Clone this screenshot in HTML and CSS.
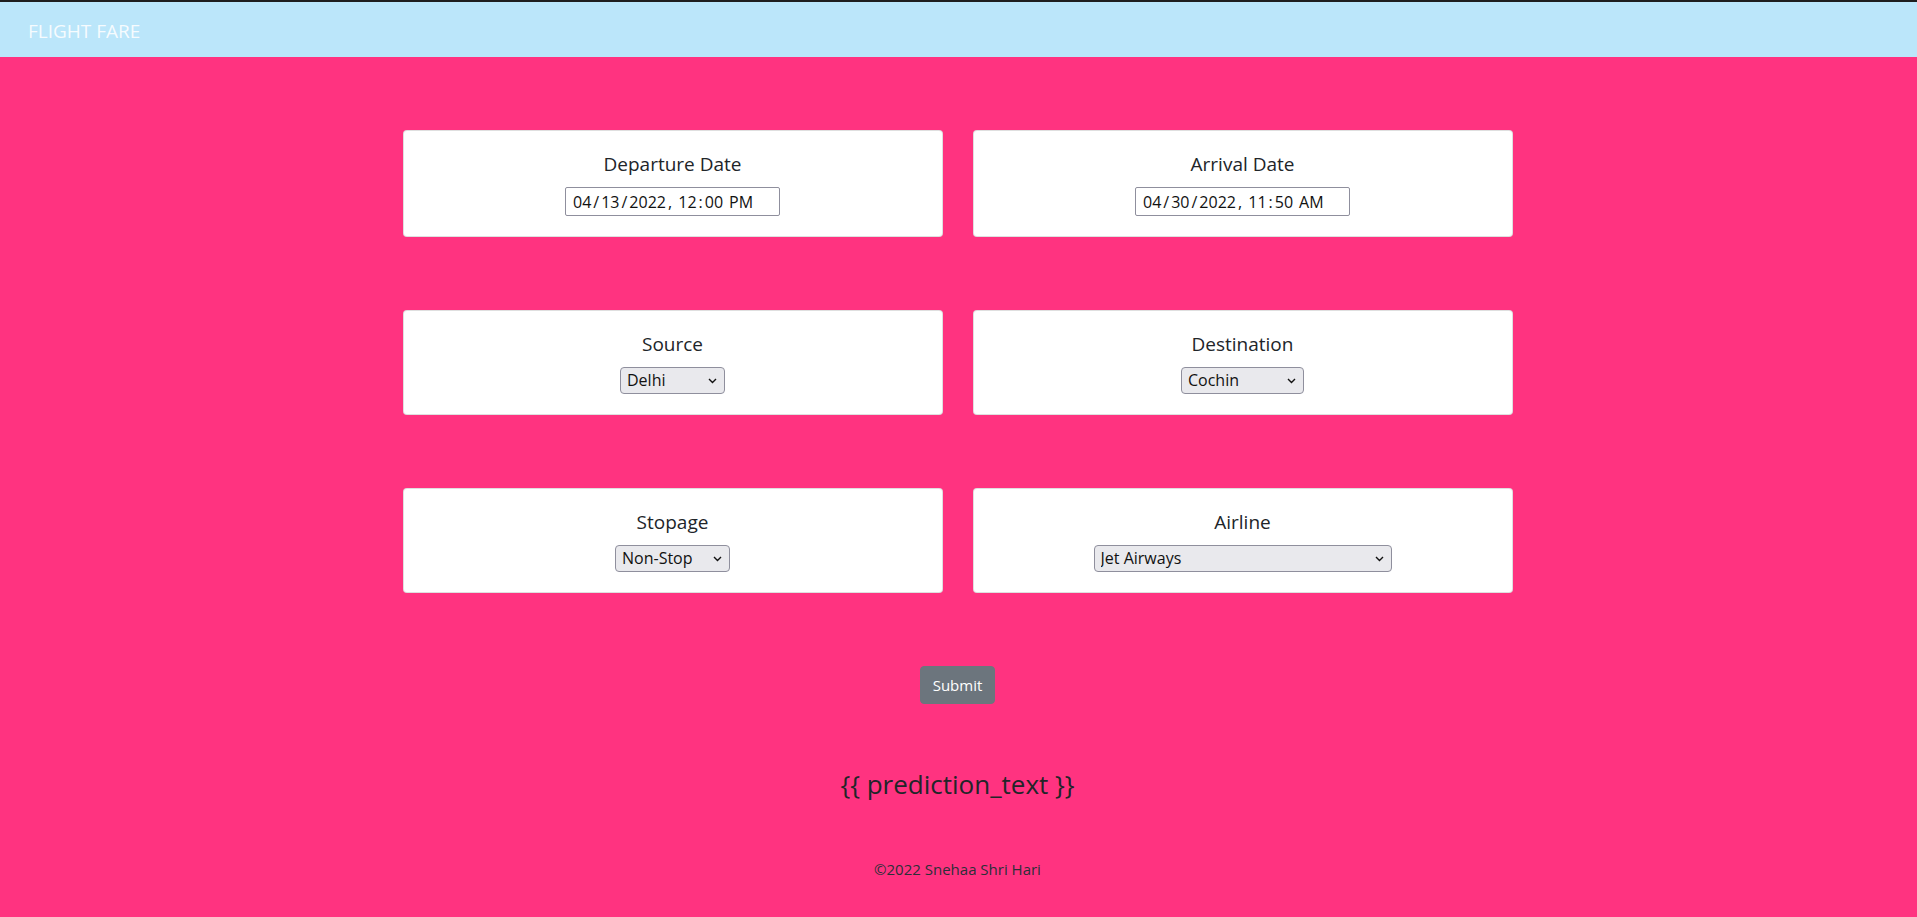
FILE: index.html
```html
<!DOCTYPE html>
<html lang="en">
<head>
<meta charset="utf-8">
<title>Flight Fare</title>
<link rel="stylesheet" href="styles.css">
</head>
<body>
<div class="topline"></div>
<nav class="navbar"><span class="brand">FLIGHT FARE</span></nav>
<main class="main">
  <form class="grid">
    <div class="card">
      <div class="card-title">Departure Date</div>
      <input class="date" type="datetime-local" value="2022-04-13T12:00">
    </div>
    <div class="card">
      <div class="card-title">Arrival Date</div>
      <input class="date" type="datetime-local" value="2022-04-30T11:50">
    </div>
    <div class="card">
      <div class="card-title">Source</div>
      <span class="sel-wrap sel-source">
        <select><option>Delhi</option><option>Kolkata</option><option>Mumbai</option><option>Chennai</option></select>
        <svg class="chev" width="9" height="6" viewBox="0 0 9 6"><path d="M1 1 L4.5 4.5 L8 1" fill="none" stroke="#111" stroke-width="1.4"/></svg>
      </span>
    </div>
    <div class="card">
      <div class="card-title">Destination</div>
      <span class="sel-wrap sel-dest">
        <select><option>Cochin</option><option>Delhi</option><option>New Delhi</option><option>Hyderabad</option><option>Kolkata</option></select>
        <svg class="chev" width="9" height="6" viewBox="0 0 9 6"><path d="M1 1 L4.5 4.5 L8 1" fill="none" stroke="#111" stroke-width="1.4"/></svg>
      </span>
    </div>
    <div class="card">
      <div class="card-title">Stopage</div>
      <span class="sel-wrap sel-stop">
        <select><option>Non-Stop</option><option>1</option><option>2</option><option>3</option><option>4</option></select>
        <svg class="chev" width="9" height="6" viewBox="0 0 9 6"><path d="M1 1 L4.5 4.5 L8 1" fill="none" stroke="#111" stroke-width="1.4"/></svg>
      </span>
    </div>
    <div class="card">
      <div class="card-title">Airline</div>
      <span class="sel-wrap sel-air">
        <select><option>Jet Airways</option><option>IndiGo</option><option>Air India</option><option>SpiceJet</option><option>Multiple carriers</option><option>GoAir</option><option>Vistara</option><option>Air Asia</option></select>
        <svg class="chev" width="9" height="6" viewBox="0 0 9 6"><path d="M1 1 L4.5 4.5 L8 1" fill="none" stroke="#111" stroke-width="1.4"/></svg>
      </span>
    </div>
  </form>
  <div class="actions"><button class="btn" type="button">Submit</button></div>
  <h3 class="prediction">{{ prediction_text }}</h3>
  <footer class="footer">©2022 Snehaa Shri Hari</footer>
</main>
</body>
</html>
```
FILE: styles.css
```css
* { box-sizing: border-box; }
html, body { margin: 0; padding: 0; }
body {
  font-family: "Open Sans", "Noto Sans", sans-serif;
  font-size: 16px;
  line-height: 1.5;
  color: #212529;
  background: #ff3380;
  min-height: 917px;
}
.topline { height: 2px; background: #1e1e1e; }
.navbar {
  height: 55px;
  background: #bbe6fa;
  display: flex;
  align-items: center;
  padding-left: 28px;
}
.brand {
  font-size: 19px;
  font-weight: 400;
  color: rgba(255, 255, 255, 0.88);
  line-height: 1;
  margin-top: 3px;
}
.main {
  display: flex;
  flex-direction: column;
  align-items: center;
  padding-top: 73px;
  padding-right: 2px;
}
.grid {
  width: 1110px;
  display: grid;
  grid-template-columns: 1fr 1fr;
  column-gap: 30px;
  row-gap: 73px;
  margin: 0;
}
.card {
  background: #fff;
  border: 1px solid rgba(0, 0, 0, 0.125);
  border-radius: 4px;
  padding: 21px 20px 20px;
  display: flex;
  flex-direction: column;
  align-items: center;
}
.card-title {
  font-size: 19px;
  line-height: 24px;
  margin-bottom: 11px;
  color: #212529;
}
.date {
  font-family: "Open Sans", "Noto Sans", sans-serif;
  font-size: 16px;
  width: 215px;
  height: 29px;
  border: 1px solid #8f8f9d;
  border-radius: 2px;
  padding: 0 6px;
  color: #111;
  background: #fff;
}
.date::-webkit-calendar-picker-indicator { display: none; }
.date::-webkit-datetime-edit-text { padding: 0 1px; }
.sel-wrap {
  position: relative;
  display: inline-flex;
}
.sel-wrap select {
  appearance: none;
  -webkit-appearance: none;
  font-family: "Open Sans", "Noto Sans", sans-serif;
  font-size: 16px;
  height: 27px;
  line-height: 25px;
  padding: 0 22px 0 6px;
  background: #e9e9ed;
  border: 1px solid #8f8f9d;
  border-radius: 4px;
  color: #111;
}
.sel-source select { width: 105px; }
.sel-dest select { width: 123px; }
.sel-stop select { width: 115px; }
.sel-air select { width: 298px; }
.chev {
  position: absolute;
  right: 8px;
  top: 11px;
  pointer-events: none;
}
.actions {
  margin-top: 73px;
  display: flex;
  justify-content: center;
}
.btn {
  font-family: "Open Sans", "Noto Sans", sans-serif;
  font-size: 15px;
  line-height: 24px;
  height: 38px;
  width: 75px;
  padding: 6px 0;
  color: #fff;
  background: #6c757d;
  border: 1px solid #6c757d;
  border-radius: 4px;
}
.prediction {
  margin: 64px 0 0;
  font-size: 26px;
  font-weight: 400;
  line-height: 1.3;
  color: #212529;
}
.footer {
  margin-top: 55px;
  font-size: 15px;
  line-height: 24px;
  color: #2b2f38;
}
```
